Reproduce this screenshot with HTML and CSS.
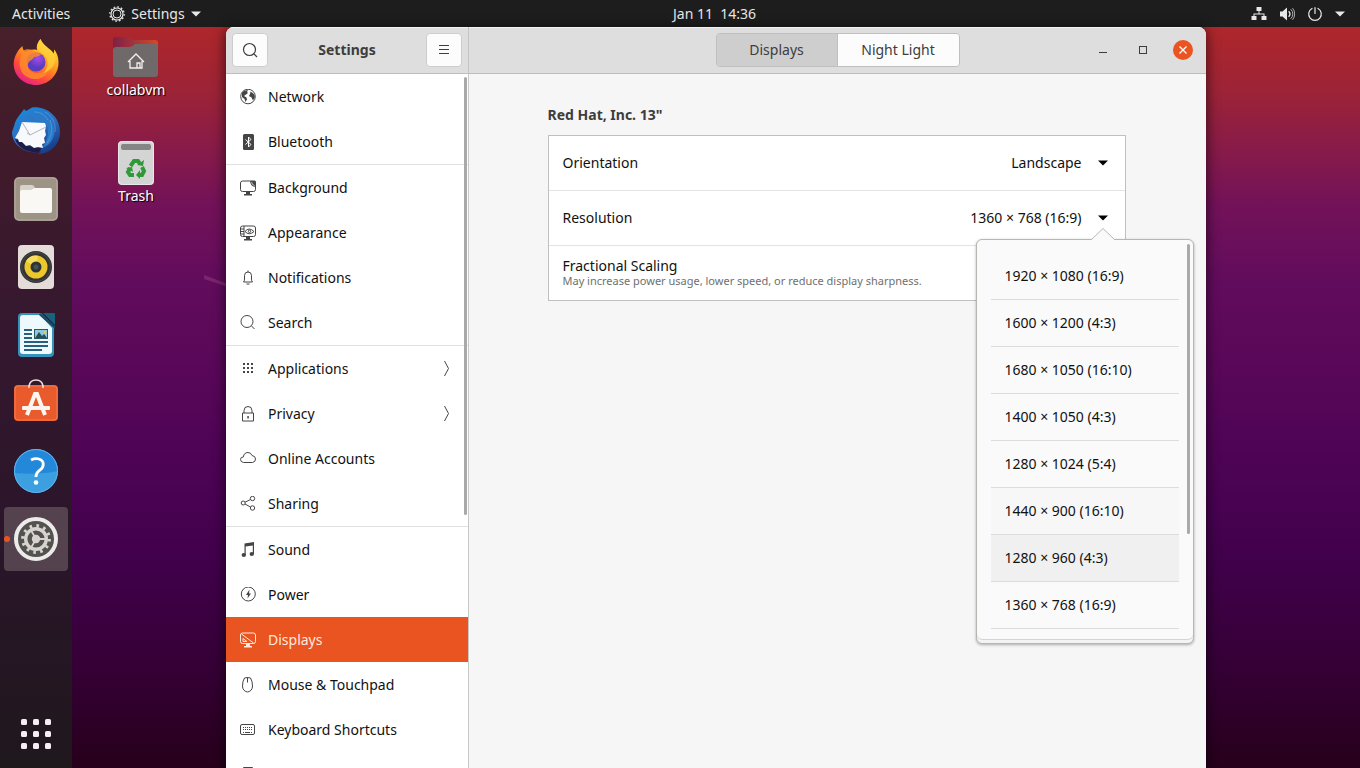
FILE: index.html
```html
<!DOCTYPE html>
<html lang="en">
<head>
    <meta charset="UTF-8">
    <meta name="viewport" content="width=device-width, initial-scale=1.0">
    <title>Settings - Displays</title>
    <link rel="stylesheet" href="styles.css">
</head>
<body>
    <!-- Top bar -->
    <header class="topbar">
        <div class="topbar-left">
            <button class="topbar-item">Activities</button>
            <button class="topbar-item app-menu">
                <svg class="icon" viewBox="0 0 16 16" fill="none" stroke="currentColor">
                    <circle cx="8" cy="8" r="6" stroke-width="1.2"/>
                    <circle cx="8" cy="8" r="4" stroke-width="1"/>
                    <circle cx="8" cy="8" r="7.2" stroke-width="1.2" stroke-dasharray="1.8 1.97"/>
                </svg>
                Settings
                <svg class="caret" viewBox="0 0 10 6"><path d="M0 .5h10L5 5.5z" fill="currentColor"/></svg>
            </button>
        </div>
        <button class="topbar-item clock">Jan 11&nbsp; 14:36</button>
        <button class="topbar-item status-menu" aria-label="System menu">
            <svg class="icon" viewBox="0 0 16 16" fill="currentColor">
                <rect x="5.5" y="1" width="5" height="4" rx=".6"/>
                <rect x=".5" y="10" width="5" height="4" rx=".6"/>
                <rect x="10.5" y="10" width="5" height="4" rx=".6"/>
                <path d="M7.5 5v2.500H2.500v3h1v-2h9v2h1v-3h-5V5z"/>
            </svg>
            <svg class="icon" viewBox="0 0 16 16" fill="none" stroke="currentColor" stroke-linecap="round">
                <path d="M1 5.500h2.500L8 1.500v13L3.500 10.500H1z" fill="currentColor" stroke="none"/>
                <path d="M10 5.800a3 3 0 0 1 0 4.400" stroke-width="1.4"/>
                <path d="M12 3.500a6 6 0 0 1 0 9M13.800 2.500a8.500 8.500 0 0 1 0 11" stroke-width="1" opacity=".7"/>
            </svg>
            <svg class="icon" viewBox="0 0 16 16" fill="none" stroke="currentColor" stroke-width="1.2" stroke-linecap="round">
                <path d="M5 2.500a6.300 6.300 0 1 0 6 0M8 1.500v6"/>
            </svg>
            <svg class="caret" viewBox="0 0 10 6"><path d="M0 .5h10L5 5.500z" fill="currentColor"/></svg>
        </button>
    </header>

    <div class="workspace">
        <!-- Dock -->
        <nav class="dock" aria-label="Dock">
            <button class="dock-item" aria-label="Firefox">
                <svg viewBox="0 0 48 48">
                    <defs>
                        <linearGradient id="fox" x1=".85" y1=".1" x2=".3" y2="1">
                            <stop offset="0" stop-color="#ffe63c"/>
                            <stop offset=".4" stop-color="#ff9a1f"/>
                            <stop offset=".72" stop-color="#ff4b38"/>
                            <stop offset="1" stop-color="#e6208a"/>
                        </linearGradient>
                        <radialGradient id="globe" cx=".6" cy=".3">
                            <stop offset="0" stop-color="#a64be8"/>
                            <stop offset="1" stop-color="#5a3cc0"/>
                        </radialGradient>
                    </defs>
                    <path d="M28.500 0c-3 3.500-4.500 7-3.500 11-4-1-9 0-12 2-2-2-2.500-4-2.500-6C6 11 2 17 1.700 24.500 1.500 37 12 46 24 46s22.500-9.500 22.500-22.500c0-6-2-10.500-4.500-13 .2 2 0 3.300-.4 4.500C39.500 10 31 7 28.500 0z" fill="url(#fox)"/>
                    <circle cx="24" cy="23" r="9.500" fill="url(#globe)"/>
                    <path d="M10 12c5-3 10-2 13 1l6 2c-1 2-4 3-7 3-1 3-5 3-6 7-1 6 4 9 10 9 7 0 10-5 10-11 3 10-4 17-12 17C13 40 6 32 8 21z" fill="#ff8a2c" opacity=".85"/>
                    <path d="M28.500 0c-3 3.500-4 8-2 11 3 3 8 5 9 11 .6 5-1 9-4 12 7-2 12-8 12-15 0-8-12-10-15-19z" fill="#ffd23b" opacity=".75"/>
                </svg>
            </button>
            <button class="dock-item" aria-label="Thunderbird">
                <svg viewBox="0 0 48 48">
                    <defs>
                        <linearGradient id="bird" x1=".2" y1="0" x2=".8" y2="1">
                            <stop offset="0" stop-color="#1d88d8"/>
                            <stop offset=".5" stop-color="#2c6fc4"/>
                            <stop offset="1" stop-color="#16357c"/>
                        </linearGradient>
                    </defs>
                    <path d="M20 .5C34-1 48 9 48 25 48 38 38 47 26 47l4-3c-5 2-12 2-18-1C5 39 0 34 0 25l2-6C4 10 10 6 12 2l2 2z" fill="url(#bird)"/>
                    <path d="M3 32l4 1c7 5 14 8 23 8l-3 4C16 46 6 41 3 32z" fill="#1b1c4a"/>
                    <path d="M12 10c6-4 11 5 22 6 4 7 2 18-4 25 10-3 15-14 11-23C36 7 22 2 12 10z" fill="#2a7ac8"/>
                    <path d="M10 15l23 1 1 3-1 5 1 4-2 3 1 5-3 1 1 4-5-1-4 1-4-3-4 1-4-4-3 0-1-3-3-1 4-7z" fill="#f7f9fc"/>
                    <path d="m10 15 8 13 16-8M18 28l-3-2" fill="none" stroke="#b0b4bb" stroke-width="1"/>
                    <path d="M33 5c8 5 11 12 10 20M38 13c3 8 2 16-3 23M22 5c7 0 11 3 14 8" fill="none" stroke="#61a5e4" stroke-width="1" opacity=".6"/>
                </svg>
            </button>
            <button class="dock-item" aria-label="Files">
                <svg viewBox="0 0 48 48">
                    <rect x="2" y="2" width="44" height="44" rx="5" fill="#9d9486"/>
                    <rect x="3" y="3" width="42" height="42" rx="4" fill="none" stroke="#b2aa9e"/>
                    <path d="M8 12q0-2 2-2h10q2 0 3 3l1 2v10H8z" fill="#d8d3ca"/>
                    <path d="M8 17q0-2 2-2h9l4-2h15q2 0 2 2v21q0 2-2 2H10q-2 0-2-2z" fill="#faf8f5"/>
                </svg>
            </button>
            <button class="dock-item" aria-label="Rhythmbox">
                <svg viewBox="0 0 48 48">
                    <rect x="6" y="2" width="36" height="44" rx="4" fill="#e3dcd8"/>
                    <circle cx="24" cy="24" r="16" fill="#343434"/>
                    <circle cx="24" cy="24" r="14.500" fill="none" stroke="#484848"/>
                    <circle cx="24" cy="24" r="11.500" fill="#edc82c"/>
                    <path d="M24 24 14 18a11.500 11.500 0 0 1 12-5.300z" fill="#f6dd62"/>
                    <circle cx="24" cy="24" r="5.500" fill="#2d3435"/>
                    <circle cx="24" cy="24" r="2.500" fill="#465354"/>
                </svg>
            </button>
            <button class="dock-item" aria-label="LibreOffice Writer">
                <svg viewBox="0 0 48 48">
                    <path d="M31 2h11q1 0 1 1v11z" fill="#16637b"/>
                    <path d="M10 2h19l13 13v27q0 4-4 4H10q-4 0-4-4V6q0-4 4-4z" fill="#3592bb"/>
                    <path d="M11 4h17l12 13v23q0 3-3 3H11q-3 0-3-3V7q0-3 3-3z" fill="#eef9fd"/>
                    <path d="m28 2 15 13v3L27 4z" fill="#134c66"/>
                    <path d="M12 19h8M12 23h8M12 27h8M12 31h24M12 35h24M12 39h18" stroke="#28617f" stroke-width="1.800"/>
                    <rect x="22" y="18" width="14" height="10" fill="#27576e"/>
                    <rect x="23" y="19" width="12" height="8" fill="#8bc9df"/>
                    <path d="m23 27 4-6 3 4 2-2 3 4z" fill="#2b4d50"/>
                    <circle cx="33" cy="21" r="1.500" fill="#e2c954"/>
                </svg>
            </button>
            <button class="dock-item" aria-label="Ubuntu Software">
                <svg viewBox="0 0 48 48">
                    <rect x="2" y="6" width="44" height="36" rx="4" fill="#e95b2c"/>
                    <rect x="3" y="7" width="42" height="34" rx="3" fill="none" stroke="#f27b4f"/>
                    <path d="M17 9V7q1-6 7-6t7 6v2" fill="none" stroke="#eee2dc" stroke-width="1.600"/>
                    <path d="m15 36 8-21h2l8 21" fill="none" stroke="#fdf5ef" stroke-width="4"/>
                    <rect x="10" y="27" width="28" height="4" rx="1" fill="#fdf5ef"/>
                </svg>
            </button>
            <button class="dock-item" aria-label="Help">
                <svg viewBox="0 0 48 48">
                    <circle cx="24" cy="24" r="22" fill="#3c9fe0"/>
                    <path d="M2 24a22 22 0 0 1 44 0q-18 4-44 2z" fill="#2488da"/>
                    <circle cx="24" cy="24" r="21.500" fill="none" stroke="#61b3ea"/>
                    <path d="M19 13q4-2 8-1c6 2 5 8 1 11-3 2-4 4-4 7" fill="none" stroke="#fff" stroke-width="2.800"/>
                    <circle cx="24" cy="35.500" r="2.300" fill="#fff"/>
                </svg>
            </button>
            <button class="dock-item active" aria-label="Settings">
                <svg viewBox="0 0 48 48" fill="none">
                    <circle cx="24" cy="24" r="20" fill="#54524f" stroke="#ecebe9" stroke-width="4"/>
                    <circle cx="24" cy="24" r="10.300" stroke="#d6d3d0" stroke-width="3.400"/>
                    <circle cx="24" cy="24" r="13.200" stroke="#d6d3d0" stroke-width="3.400" stroke-dasharray="2.600 4.312"/>
                    <circle cx="24" cy="24" r="4.200" fill="#d6d3d0"/>
                    <path d="M24 24h10M24 24l-5-8.700M24 24l-5 8.700" stroke="#d6d3d0" stroke-width="1.800"/>
                </svg>
                <span class="running-dot"></span>
            </button>
            <button class="dock-item show-apps" aria-label="Show Applications">
                <svg viewBox="0 0 48 48" fill="#f6eef4">
                    <rect x="9" y="9" width="6" height="6" rx="1.500"/><rect x="21" y="9" width="6" height="6" rx="1.500"/><rect x="33" y="9" width="6" height="6" rx="1.500"/>
                    <rect x="9" y="21" width="6" height="6" rx="1.500"/><rect x="21" y="21" width="6" height="6" rx="1.500"/><rect x="33" y="21" width="6" height="6" rx="1.500"/>
                    <rect x="9" y="33" width="6" height="6" rx="1.500"/><rect x="21" y="33" width="6" height="6" rx="1.500"/><rect x="33" y="33" width="6" height="6" rx="1.500"/>
                </svg>
            </button>
        </nav>

        <main class="desktop">
            <svg class="wallpaper-streak" viewBox="0 0 24 14"><path d="M0 0v4l24 8V9z" fill="#a04a86" opacity=".4"/></svg>

            <div class="desktop-icons">
                <button class="desktop-icon">
                    <svg viewBox="0 0 48 48">
                        <defs>
                            <linearGradient id="tab" x1="0" x2="1">
                                <stop offset="0" stop-color="#7d2049"/>
                                <stop offset="1" stop-color="#d34a26"/>
                            </linearGradient>
                        </defs>
                        <path d="M1 7q0-3 3-3h13q2 0 4 3h22q3 0 3 3v8H1z" fill="url(#tab)"/>
                        <path d="M1 17q0-3 3-3h14q2 0 5-3h20q3 0 3 3v27q0 3-3 3H4q-3 0-3-3z" fill="#70696a"/>
                        <path d="M16 29l8-8 8 8M18 28v7h12v-7M25 35v-5h3v5" fill="none" stroke="#f3f1f1" stroke-width="1.300"/>
                    </svg>
                    <span>collabvm</span>
                </button>
                <button class="desktop-icon">
                    <svg viewBox="0 0 48 48">
                        <rect x="6" y="2" width="36" height="44" rx="4" fill="#d5d4d4"/>
                        <rect x="6.500" y="2.500" width="35" height="43" rx="4" fill="none" stroke="#e9e8e8"/>
                        <rect x="9" y="5" width="30" height="6" rx="2" fill="#868585"/>
                        <g fill="none" stroke="#2f9a37" stroke-width="4">
                            <path d="m18.500 27 3.500-5h4l2 3"/>
                            <path d="m30 28 2 4-2 4h-4"/>
                            <path d="M22 36h-4l-2-3 2-4"/>
                        </g>
                        <path d="m25 26 6 1 1-6zM28 31l-4 5 4 4zM14 29l6-1 1 5z" fill="#2f9a37"/>
                    </svg>
                    <span>Trash</span>
                </button>
            </div>

            <!-- Settings window -->
            <section class="window">
                <header class="titlebar">
                    <div class="titlebar-side">
                        <button class="tool-button" aria-label="Search">
                            <svg class="icon" viewBox="0 0 16 16" fill="none" stroke="currentColor" stroke-width="1.200">
                                <circle cx="7.500" cy="7.500" r="6"/><path d="m12 12 3 3"/>
                            </svg>
                        </button>
                        <h1>Settings</h1>
                        <button class="tool-button" aria-label="Menu">
                            <svg class="icon" viewBox="0 0 16 16" stroke="currentColor"><path d="M3 3.500h10M3 7.500h10M3 11.500h10"/></svg>
                        </button>
                    </div>
                    <div class="titlebar-main">
                        <div class="tabs">
                            <button class="tab active">Displays</button>
                            <button class="tab">Night Light</button>
                        </div>
                        <div class="window-controls">
                            <button aria-label="Minimize"><svg viewBox="0 0 20 20" stroke="#3d3d3d"><path d="M6 12.500h8"/></svg></button>
                            <button aria-label="Maximize"><svg viewBox="0 0 20 20" fill="none" stroke="#3d3d3d"><rect x="6.500" y="6.500" width="7" height="7"/></svg></button>
                            <button class="close" aria-label="Close"><svg viewBox="0 0 20 20" stroke="#fff" stroke-width="1.300"><path d="m6.500 6.500 7 7m0-7-7 7"/></svg></button>
                        </div>
                    </div>
                </header>

                <div class="window-body">
                    <nav class="sidebar" aria-label="Settings panels">
                        <a class="nav-row" href="#">
                            <svg class="icon" viewBox="0 0 16 16"><circle cx="8" cy="7.500" r="7.300" fill="none" stroke="currentColor"/><path d="M2 3.500q2-2.500 6-2.500L7 3 8 4 6 5.500 4 7l2.500 1.500.5 2L5.500 13 4.500 10 2 8zM10.500 2.500l3.500 2.500 1 3-2 3.500-1.500-3L9 7l1-2z" fill="currentColor"/></svg>
                            Network
                        </a>
                        <a class="nav-row" href="#">
                            <svg class="icon" viewBox="0 0 16 16"><rect x="3" y="0" width="11" height="16" rx="1.500" fill="currentColor"/><path d="m5.500 5.500 5.500 5L8.500 13V3L11 5.500l-5.500 5" fill="none" stroke="#fff"/></svg>
                            Bluetooth
                        </a>
                        <hr>
                        <a class="nav-row" href="#">
                            <svg class="icon" viewBox="0 0 16 16"><path d="M10 1H2.500q-2 0-2 2v6.500q0 2 2 2h11q2 0 2-2V6" fill="none" stroke="currentColor"/><path d="M10 .5h4.500q1.500 0 1.500 1.500v5q-6-.5-6-6.500zM6 12h4v2h2v1.500H4V14h2z" fill="currentColor"/><path d="M11.500 2q.5 3 3 3.500" fill="none" stroke="#fff" stroke-width=".7"/></svg>
                            Background
                        </a>
                        <a class="nav-row" href="#">
                            <svg class="icon" viewBox="0 0 16 16" fill="none" stroke="currentColor"><path d="M2.500 1h11q2 0 2 2v6.500q0 2-2 2h-11q-2 0-2-2V3q0-2 2-2zM4 1v10.500M1 4h3M1 6.500h3M1 9h3"/><path d="M5 6.500q4-5 9 0-5 4.500-9 0z"/><circle cx="9.500" cy="6.300" r="1.200"/><path d="M6 12h4v2h2v1.500H4V14h2z" fill="currentColor" stroke="none"/></svg>
                            Appearance
                        </a>
                        <a class="nav-row" href="#">
                            <svg class="icon" viewBox="0 0 16 16" fill="none" stroke="currentColor"><path d="M3.500 12q1-1 1-3V5.500q0-3.500 3.500-3.500T11.500 5.500V9q0 2 1 3zM8 .5V2M6.500 14h3"/></svg>
                            Notifications
                        </a>
                        <a class="nav-row" href="#">
                            <svg class="icon" viewBox="0 0 16 16" fill="none" stroke="currentColor"><circle cx="7" cy="6.500" r="6"/><path d="m11.500 11 3 3"/></svg>
                            Search
                        </a>
                        <hr>
                        <a class="nav-row" href="#">
                            <svg class="icon" viewBox="0 0 16 16" fill="currentColor"><path d="M3 2h2v2H3zM7 2h2v2H7zM11 2h2v2h-2zM3 6h2v2H3zM7 6h2v2H7zM11 6h2v2h-2zM3 10h2v2H3zM7 10h2v2H7zM11 10h2v2h-2z"/></svg>
                            Applications
                            <svg class="icon arrow" viewBox="0 0 16 16" fill="none" stroke="currentColor"><path d="M6.500 0 10.500 7.500l-4 7.500"/></svg>
                        </a>
                        <a class="nav-row" href="#">
                            <svg class="icon" viewBox="0 0 16 16" fill="none" stroke="currentColor"><path d="M2.500 7h11v8h-11zM4 7V4.500q0-4 4-4t4 4V7"/><path d="M7.300 10h1.500v2.500H7.300z" fill="currentColor" stroke="none"/></svg>
                            Privacy
                            <svg class="icon arrow" viewBox="0 0 16 16" fill="none" stroke="currentColor"><path d="M6.500 0 10.500 7.500l-4 7.500"/></svg>
                        </a>
                        <a class="nav-row" href="#">
                            <svg class="icon" viewBox="0 0 16 16" fill="none" stroke="currentColor"><path d="M3.500 11.500Q.5 11 .5 8.500T3.300 6q.7-4.500 4.700-4.500 3 0 4 3 3.500.5 3.500 3.500T12.500 11.500z"/></svg>
                            Online Accounts
                        </a>
                        <a class="nav-row" href="#">
                            <svg class="icon" viewBox="0 0 16 16" fill="none" stroke="currentColor"><circle cx="3.200" cy="7" r="2"/><circle cx="12.500" cy="2.500" r="2.200"/><circle cx="12.500" cy="12" r="2.200"/><path d="m5 6.200 5.500-2.700M5 8l5.500 3"/></svg>
                            Sharing
                        </a>
                        <hr>
                        <a class="nav-row" href="#">
                            <svg class="icon" viewBox="0 0 16 16" fill="currentColor"><path d="m4.500 1.500 9.500-1.500v12h-1.200V3.500L5.700 4.500V13H4.500z"/><ellipse cx="3.800" cy="13" rx="2.200" ry="1.900"/><ellipse cx="11.800" cy="12" rx="2.200" ry="1.900"/></svg>
                            Sound
                        </a>
                        <a class="nav-row" href="#">
                            <svg class="icon" viewBox="0 0 16 16"><circle cx="8.300" cy="7" r="7" fill="none" stroke="currentColor"/><path d="M9.500 2.500 6 8h2l-.5 3.500L11 6.500H9z" fill="currentColor"/></svg>
                            Power
                        </a>
                        <a class="nav-row selected" href="#" aria-current="page">
                            <svg class="icon" viewBox="0 0 16 16" fill="none" stroke="currentColor"><path d="M2.500 1h11q2 0 2 2v6.500q0 2-2 2h-11q-2 0-2-2V3q0-2 2-2zM1.500 2l12 9M3 6.500v3h4z"/><path d="M6 12h4v2h2v1.500H4V14h2z" fill="currentColor" stroke="none"/></svg>
                            Displays
                        </a>
                        <a class="nav-row" href="#">
                            <svg class="icon" viewBox="0 0 16 16" fill="none" stroke="currentColor"><path d="M4.500 1Q7.500 0 10.500 1 12.500 4 12.500 9t-5 6q-5-1-5-6t2-8zM7.500 .500v5"/></svg>
                            Mouse &amp; Touchpad
                        </a>
                        <a class="nav-row" href="#">
                            <svg class="icon" viewBox="0 0 16 16" fill="none" stroke="currentColor"><rect x=".5" y="2.500" width="14" height="10" rx="1.500"/><path d="M3 5.500h10M3 7.500h10" stroke-dasharray="1 1"/><path d="M3 10.500h1M5 10.500h5M11 10.500h1"/></svg>
                            Keyboard Shortcuts
                        </a>
                        <a class="nav-row" href="#" aria-label="Printers">
                            <svg class="icon" viewBox="0 0 16 16" fill="none" stroke="currentColor"><path d="M3.500 15V.5h9V15M3.500 3h9"/></svg>
                        </a>
                        <span class="scroll-thumb"></span>
                    </nav>

                    <div class="content">
                        <div class="panel">
                            <h2>Red Hat, Inc. 13"</h2>
                            <div class="card">
                                <div class="card-row">
                                    <label for="orientation">Orientation</label>
                                    <div class="combo">
                                        <select id="orientation">
                                            <option>Landscape</option>
                                        </select>
                                        <svg class="caret" viewBox="0 0 10 6"><path d="M0 .5h10L5 5.500z"/></svg>
                                    </div>
                                </div>
                                <div class="card-row">
                                    <label for="resolution">Resolution</label>
                                    <div class="combo">
                                        <select id="resolution">
                                            <option>1360 × 768 (16:9)</option>
                                        </select>
                                        <svg class="caret" viewBox="0 0 10 6"><path d="M0 .5h10L5 5.500z"/></svg>
                                    </div>

                                    <!-- Resolution list, open -->
                                    <div class="popover">
                                        <svg class="popover-arrow" viewBox="0 0 24 12"><path d="M0 12 12 .5 24 12" fill="#fafafa" stroke="#b6b6b3"/></svg>
                                        <div class="mode-list">
                                            <button class="mode">1920 × 1080 (16:9)</button>
                                            <button class="mode">1600 × 1200 (4:3)</button>
                                            <button class="mode">1680 × 1050 (16:10)</button>
                                            <button class="mode">1400 × 1050 (4:3)</button>
                                            <button class="mode">1280 × 1024 (5:4)</button>
                                            <button class="mode fading">1440 × 900 (16:10)</button>
                                            <button class="mode hover">1280 × 960 (4:3)</button>
                                            <button class="mode">1360 × 768 (16:9)</button>
                                        </div>
                                        <span class="scroll-thumb"></span>
                                    </div>
                                </div>
                                <div class="card-row">
                                    <div>
                                        <div class="row-title">Fractional Scaling</div>
                                        <p class="hint">May increase power usage, lower speed, or reduce display sharpness.</p>
                                    </div>
                                </div>
                            </div>
                        </div>
                    </div>
                </div>
            </section>
        </main>
    </div>
</body>
</html>
```

FILE: styles.css
```css
* {
    box-sizing: border-box;
}

body {
    margin: 0;
    height: 100vh;
    display: flex;
    flex-direction: column;
    overflow: hidden;
    font-family: "Noto Sans", "Open Sans", sans-serif;
    font-size: 14px;
    line-height: 20px;
    color: #111;
}

button,
select {
    font: inherit;
    color: inherit;
    background: none;
    border: none;
    padding: 0;
    margin: 0;
}

svg {
    display: block;
    flex: none;
}

h1,
h2,
p {
    margin: 0;
}

.icon {
    width: 16px;
    height: 16px;
}

.caret {
    width: 10px;
    height: 6px;
}

/* Top bar */
.topbar {
    display: grid;
    grid-template-columns: 1fr auto 1fr;
    align-items: center;
    height: 27px;
    flex: none;
    padding: 0 15px 0 12px;
    background: #1d1d1d;
    color: #e8e8e8;
}

.topbar-left,
.topbar-item {
    display: flex;
    align-items: center;
}

.topbar-left {
    gap: 39px;
}

.app-menu {
    gap: 6px;
}

.clock {
    margin-left: 72px;
}

.status-menu {
    justify-self: end;
    gap: 12px;
}

/* Dock and desktop */
.workspace {
    flex: 1;
    display: flex;
    min-height: 0;
    background: linear-gradient(#ae272b 0%, #9c2337 9%, #861a4a 17%, #731259 24%, #620c5d 34%, #5a0859 45%, #4c0354 60%, #40004a 73%, #350035 87%, #27001b 100%);
}

.dock {
    width: 72px;
    flex: none;
    display: flex;
    flex-direction: column;
    align-items: center;
    gap: 4px;
    padding: 4px 4px 2px;
    background: linear-gradient(#48202a 0%, #3f1a2b 20%, #35182f 40%, #2a1529 70%, #1f181d 100%);
}

.dock-item {
    position: relative;
    width: 64px;
    height: 64px;
    flex: none;
    display: flex;
    align-items: center;
    justify-content: center;
    border-radius: 4px;
}

.dock-item svg {
    width: 48px;
    height: 48px;
}

.dock-item.active {
    background: #55424f;
}

.running-dot {
    position: absolute;
    left: 0;
    top: 29px;
    width: 6px;
    height: 6px;
    border-radius: 50%;
    background: #e95420;
}

.show-apps {
    margin-top: auto;
}

.desktop {
    position: relative;
    flex: 1;
    min-width: 0;
}

.wallpaper-streak {
    position: absolute;
    left: 132px;
    top: 248px;
    width: 24px;
    height: 14px;
}

.desktop-icons {
    display: flex;
    flex-direction: column;
    gap: 36px;
    width: 128px;
    padding-top: 6px;
}

.desktop-icon {
    display: flex;
    flex-direction: column;
    align-items: center;
    height: 70px;
    line-height: 18px;
    color: #fff;
    text-shadow: 1px 1px 1px #000;
}

.desktop-icon svg {
    width: 48px;
    height: 48px;
}

/* Window */
.window {
    position: absolute;
    top: 0;
    bottom: 0;
    left: 154px;
    right: 154px;
    display: flex;
    flex-direction: column;
    overflow: hidden;
    border-radius: 8px 8px 0 0;
    background: #f6f6f6;
    box-shadow: 0 2px 12px 2px rgba(0, 0, 0, 0.5);
}

.titlebar {
    display: flex;
    height: 47px;
    flex: none;
    background: #dedede;
    border-bottom: 1px solid #bdbdbd;
    box-shadow: inset 0 1px #f2f2f2;
    color: #3d3d3d;
}

.titlebar-side {
    width: 243px;
    flex: none;
    display: flex;
    align-items: center;
    justify-content: space-between;
    padding: 0 6px;
    border-right: 1px solid #c4c4c4;
}

.titlebar h1,
.panel h2 {
    font-size: 14px;
    font-weight: 700;
    line-height: 20px;
    color: #3d3d3d;
}

.tool-button {
    width: 36px;
    height: 34px;
    display: flex;
    align-items: center;
    justify-content: center;
    background: #fcfcfc;
    border: 1px solid #cdcdcd;
    border-radius: 4px;
}

.titlebar-main {
    flex: 1;
    display: grid;
    grid-template-columns: 1fr auto 1fr;
    align-items: center;
    padding: 0 13px;
}

.tabs {
    grid-column: 2;
    display: flex;
    height: 34px;
    border: 1px solid #bfbfbf;
    border-radius: 4px;
    overflow: hidden;
}

.tab {
    width: 121px;
    background: #fcfcfc;
}

.tab.active {
    background: #cecece;
    border-right: 1px solid #bfbfbf;
}

.window-controls {
    justify-self: end;
    display: flex;
    gap: 20px;
}

.window-controls button {
    width: 20px;
    height: 20px;
    border-radius: 50%;
}

.window-controls .close {
    background: #e95420;
}

.window-body {
    flex: 1;
    display: flex;
    min-height: 0;
}

/* Sidebar */
.sidebar {
    position: relative;
    width: 243px;
    flex: none;
    overflow: hidden;
    background: #fff;
    border-right: 1px solid #c8c8c8;
}

.sidebar hr {
    margin: 0;
    border: none;
    border-top: 1px solid #e0e0e0;
}

.nav-row {
    display: flex;
    align-items: center;
    gap: 12px;
    height: 45px;
    padding: 0 14px;
    color: inherit;
    text-decoration: none;
}

.nav-row .icon {
    color: #454545;
}

.nav-row .arrow {
    margin-left: auto;
}

.nav-row.selected,
.nav-row.selected .icon {
    color: #ffe9df;
}

.nav-row.selected {
    background: #e95420;
}

.scroll-thumb {
    position: absolute;
    width: 3px;
    border-radius: 2px;
    background: #a9a9a9;
}

.sidebar .scroll-thumb {
    top: 3px;
    right: 1px;
    height: 438px;
}

/* Displays panel */
.content {
    flex: 1;
    min-width: 0;
    padding: 31px 26px 31px 24px;
}

.panel {
    max-width: 578px;
    margin: 0 auto;
}

.card {
    margin-top: 10px;
    background: #fff;
    border: 1px solid #c0c0c0;
}

.card-row {
    position: relative;
    display: flex;
    align-items: center;
    justify-content: space-between;
    height: 54px;
    padding: 0 14px;
}

.card-row + .card-row {
    height: 55px;
    border-top: 1px solid #e3e3e3;
}

.combo {
    display: flex;
    align-items: center;
    gap: 16px;
    padding-right: 3px;
}

.combo select {
    appearance: none;
    text-align: right;
}

.row-title {
    line-height: 16px;
}

.hint {
    font-size: 11px;
    line-height: 14px;
    color: #6f6f6f;
}

/* Popover list */
.popover {
    position: absolute;
    z-index: 1;
    top: 48px;
    right: -69px;
    width: 218px;
    height: 405px;
    padding: 13px 14px 3px;
    background: #fafafa;
    border: 1px solid #b6b6b3;
    border-radius: 6px;
    box-shadow: 0 1px 3px rgba(0, 0, 0, 0.3), inset 0 -3px #f4f4f4, inset 0 -4px #d4d4d4;
}

.popover-arrow {
    position: absolute;
    top: -12px;
    right: 78px;
    width: 24px;
    height: 12px;
}

.mode-list {
    display: flex;
    flex-direction: column;
}

.mode {
    height: 47px;
    padding: 0 14px;
    text-align: left;
    border-bottom: 1px solid #dcdcdc;
}

.mode.fading {
    background: #f7f7f7;
}

.mode.hover {
    background: #f0f0f0;
}

.popover .scroll-thumb {
    top: 4px;
    right: 3px;
    height: 290px;
}
```
